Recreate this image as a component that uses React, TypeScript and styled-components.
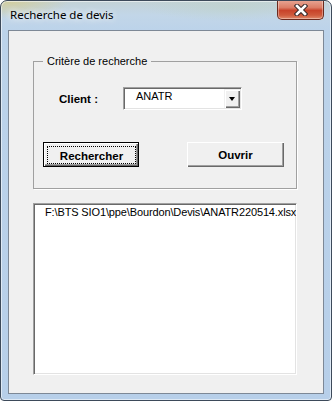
import React from "react";
import styled, { createGlobalStyle } from "styled-components";

const Global = createGlobalStyle`
  html, body { margin: 0; padding: 0; background: #ffffff; }
  body { width: 332px; height: 401px; overflow: hidden; }
  * { box-sizing: border-box; }
`;

const Window = styled.div`
  width: 332px;
  height: 401px;
  border: 1px solid #3d4a5a;
  border-radius: 7px 7px 4px 4px;
  background:
    radial-gradient(ellipse 60px 18px at 8px 0px, rgba(214, 204, 140, 0.75), rgba(214, 204, 140, 0) 100%),
    radial-gradient(ellipse 90px 14px at 230px 6px, rgba(190, 210, 200, 0.6), rgba(190, 210, 200, 0) 100%),
    linear-gradient(180deg, #c3d2d6 0px, #c2d6e8 14px, #bcd3ea 30px, #b7cfe9 100%);
  box-shadow: inset 0 0 0 1px rgba(255, 255, 255, 0.55);
  display: flex;
  flex-direction: column;
  overflow: hidden;
`;

const TitleBar = styled.div`
  height: 29px;
  flex: none;
  display: flex;
  align-items: flex-start;
  justify-content: space-between;
  padding: 0 7px 0 9px;
`;

const Title = styled.span`
  font-family: "Noto Sans", "Open Sans", sans-serif;
  font-size: 11.5px;
  line-height: 28px;
  color: #000;
  text-shadow: 0 0 6px rgba(255, 255, 255, 0.95), 0 0 10px rgba(255, 255, 255, 0.7);
`;

const CloseButton = styled.div`
  width: 47px;
  height: 20px;
  margin-top: -1px;
  border: 1px solid #6b2a1e;
  border-top: none;
  border-radius: 0 0 5px 5px;
  background: linear-gradient(180deg, #e9a896 0%, #dc7d66 40%, #c8432a 55%, #cf5a3c 80%, #e08a6c 100%);
  box-shadow: inset 0 0 0 1px rgba(255, 255, 255, 0.35);
  display: flex;
  align-items: center;
  justify-content: center;
`;

const Body = styled.div`
  flex: 1;
  display: flex;
  padding: 0 7px 6px 7px;
`;

const Client = styled.div`
  flex: 1;
  border: 1px solid #7d8896;
  background: #f0f0f0;
  display: flex;
  flex-direction: column;
  align-items: flex-start;
  padding: 24px 0 0 24px;
  font-family: "Liberation Sans", Arial, sans-serif;
  font-size: 11px;
  color: #000;
`;

const GroupBox = styled.fieldset`
  margin: 0;
  width: 264px;
  border: 1px solid #a0a0a0;
  box-shadow: 1px 1px 0 #ffffff;
  padding: 19px 0 21px 0;
  min-width: 0;
`;

const Legend = styled.legend`
  margin-left: 9px;
  padding: 0 4px;
  font-size: 11px;
  line-height: 13px;
`;

const FieldRow = styled.div`
  display: flex;
  align-items: center;
  padding-left: 25px;
`;

const FieldLabel = styled.span`
  width: 64px;
  font-weight: bold;
  font-size: 11.5px;
  line-height: 13px;
  padding-top: 2px;
`;

const Sunken = styled.div`
  border: 1px solid;
  border-color: #a0a0a0 #ffffff #ffffff #a0a0a0;
  box-shadow: inset 1px 1px 0 #696969, inset -1px -1px 0 #e3e3e3;
  background: #ffffff;
`;

const Combo = styled(Sunken)`
  width: 119px;
  height: 23px;
  display: flex;
  align-items: stretch;
  padding: 1px;
`;

const ComboText = styled.span`
  flex: 1;
  padding: 0 0 0 11px;
  line-height: 14px;
`;

const DropButton = styled.div`
  width: 16px;
  background: #f0f0f0;
  box-shadow: inset 1px 1px 0 #f0f0f0, inset 2px 2px 0 #ffffff, inset -1px -1px 0 #696969, inset -2px -2px 0 #a0a0a0;
  display: flex;
  align-items: center;
  justify-content: center;
`;

const Arrow = styled.span`
  width: 0;
  height: 0;
  border-left: 3.5px solid transparent;
  border-right: 3.5px solid transparent;
  border-top: 4px solid #000;
  margin-top: 1px;
`;

const ButtonRow = styled.div`
  display: flex;
  gap: 48px;
  margin-top: 32px;
  padding-left: 9px;
`;

const Button = styled.div<{ $isDefault?: boolean; $w: number }>`
  width: ${(p) => p.$w}px;
  height: 25px;
  display: flex;
  padding: ${(p) => (p.$isDefault ? "3px 2px 2px 3px" : "0")};
  background: #f0f0f0;
  border: ${(p) => (p.$isDefault ? "1px solid #000" : "none")};
  box-shadow: inset 1px 1px 0 #ffffff, inset -1px -1px 0 #696969, inset -2px -2px 0 #a0a0a0;
  font-weight: bold;
  font-size: 11.5px;
`;

const ButtonLabel = styled.span<{ $focused?: boolean }>`
  flex: 1;
  display: flex;
  align-items: center;
  justify-content: center;
  border: 1px dotted ${(p) => (p.$focused ? "#000" : "transparent")};
  padding-top: 1px;
`;

const ListBox = styled(Sunken)`
  margin-top: 14px;
  width: 264px;
  height: 172px;
  padding: 2px 0 0 11px;
  overflow: hidden;
`;

const ListItem = styled.div`
  line-height: 13px;
  white-space: nowrap;
  letter-spacing: -0.13px;
`;

const CloseGlyph = () => (
  <svg width="14" height="12" viewBox="0 0 14 12">
    <path d="M3 2 L11 10 M11 2 L3 10" stroke="#3a2a2a" strokeWidth="4.6" strokeLinecap="square" fill="none" />
    <path d="M3 2 L11 10 M11 2 L3 10" stroke="#ffffff" strokeWidth="2.6" strokeLinecap="square" fill="none" />
  </svg>
);

export default function App() {
  return (
    <>
      <Global />
      <Window>
        <TitleBar>
          <Title>Recherche de devis</Title>
          <CloseButton>
            <CloseGlyph />
          </CloseButton>
        </TitleBar>
        <Body>
          <Client>
            <GroupBox>
              <Legend>Critère de recherche</Legend>
              <FieldRow>
                <FieldLabel>Client :</FieldLabel>
                <Combo>
                  <ComboText>ANATR</ComboText>
                  <DropButton>
                    <Arrow />
                  </DropButton>
                </Combo>
              </FieldRow>
              <ButtonRow>
                <Button $isDefault $w={96}>
                  <ButtonLabel $focused>Rechercher</ButtonLabel>
                </Button>
                <Button $w={97}>
                  <ButtonLabel>Ouvrir</ButtonLabel>
                </Button>
              </ButtonRow>
            </GroupBox>
            <ListBox>
              <ListItem>F:\BTS SIO1\ppe\Bourdon\Devis\ANATR220514.xlsx</ListItem>
            </ListBox>
          </Client>
        </Body>
      </Window>
    </>
  );
}
